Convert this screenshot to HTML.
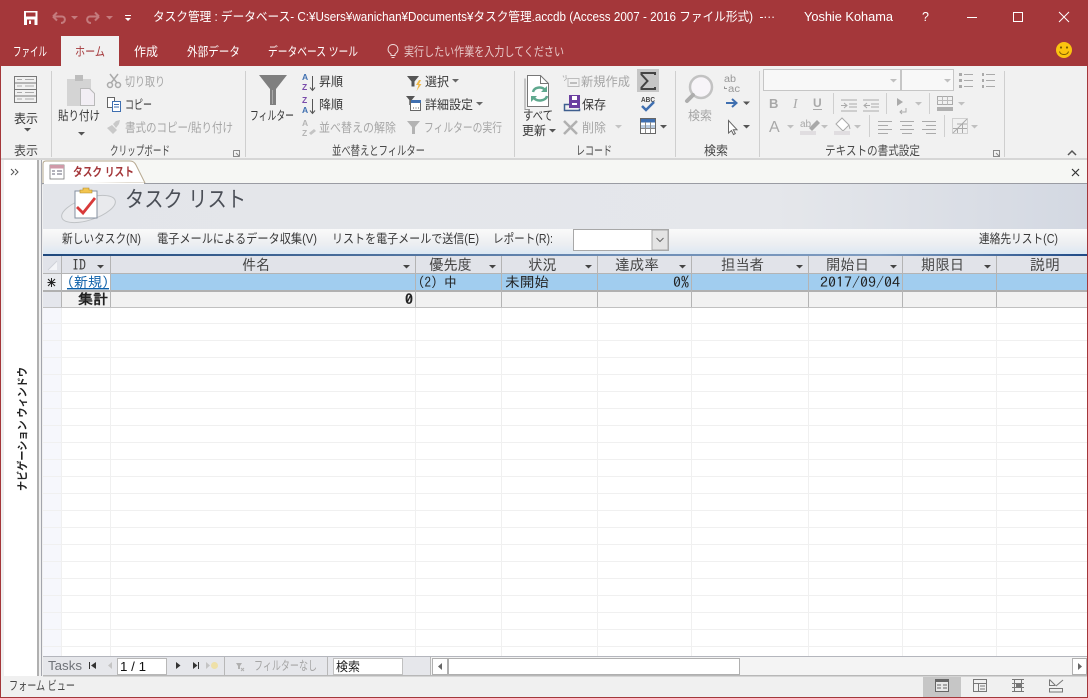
<!DOCTYPE html>
<html lang="ja"><head><meta charset="utf-8"><title>タスク管理</title>
<style>
html,body{margin:0;padding:0;width:1088px;height:698px;overflow:hidden;background:#f0f0f0}
svg{display:block}
text{font-family:"Liberation Sans","Noto Sans CJK JP",sans-serif;font-size:12.5px;fill:#484848;white-space:pre}
.w{fill:#fff}.g{fill:#a6a6a6}.d{fill:#383838}.l{fill:#555}
.m{font-family:"IPAGothic","Noto Sans CJK JP",monospace;font-size:14px;fill:#222}
.h{font-family:"IPAGothic","Noto Sans CJK JP",sans-serif;font-size:15px;fill:#444}
</style></head><body>
<svg width="1088" height="698" viewBox="0 0 1088 698" xmlns="http://www.w3.org/2000/svg">
<defs>
<linearGradient id="fh" x1="0" x2="1" y1="0" y2="0"><stop offset="0" stop-color="#e3e5ea"/><stop offset=".7" stop-color="#e5e7eb"/><stop offset="1" stop-color="#d3d8e2"/></linearGradient>
<linearGradient id="tb" x1="0" x2="0" y1="0" y2="1"><stop offset="0" stop-color="#fafafa"/><stop offset=".6" stop-color="#eceef1"/><stop offset="1" stop-color="#dce8f3"/></linearGradient>
<linearGradient id="bl" x1="0" x2="1" y1="0" y2="0"><stop offset="0" stop-color="#1f497d"/><stop offset=".55" stop-color="#6d8db5"/><stop offset=".8" stop-color="#7f9cc0"/><stop offset="1" stop-color="#1f4a86"/></linearGradient>
<pattern id="rows" width="10" height="17" patternUnits="userSpaceOnUse" y="307"><rect y="16" width="10" height="1" fill="#f0f0f0"/></pattern>
<path id="dn" d="M0 0h7l-3.500 3.500z"/>
</defs>

<!-- Title bar -->
<rect width="1088" height="66" fill="#a4373a"/>
<rect x="24" y="11" width="13.500" height="14" fill="#fff"/><rect x="26" y="12.500" width="9.500" height="4" fill="#a4373a"/><rect x="27" y="19.500" width="7.500" height="5.500" fill="#a4373a"/><rect x="29" y="20.500" width="2" height="3.500" fill="#fff"/>
<path d="M53 16.500h9c4 0 4 6.500-1 6.500M53 16.500l4-4M53 16.500l4 4" fill="none" stroke="#c47b7d" stroke-width="2"/>
<path d="M99 16.500h-9c-4 0-4 6.500 1 6.500M99 16.500l-4-4M99 16.500l-4 4" fill="none" stroke="#c47b7d" stroke-width="2"/>
<use href="#dn" x="71" y="16" fill="#c47b7d"/><use href="#dn" x="106" y="16" fill="#c47b7d"/>
<path d="M125 15h6v1h-6zM125 18h6l-3 3z" fill="#fff"/>
<text class="w" x="153" y="21" textLength="622" lengthAdjust="spacingAndGlyphs">タスク管理 : データベース- C:¥Users¥wanichan¥Documents¥タスク管理.accdb (Access 2007 - 2016 ファイル形式)  -···</text>
<text class="w" x="804" y="21" textLength="89" lengthAdjust="spacingAndGlyphs">Yoshie Kohama</text>
<text class="w" x="922" y="21">?</text>
<rect x="967" y="17" width="10" height="1" fill="#fff"/>
<rect x="1013.500" y="12.500" width="9" height="9" fill="none" stroke="#fff"/>
<path d="M1059 12l10 10M1069 12l-10 10" stroke="#fff" fill="none"/>

<!-- Tabs -->
<rect x="61" y="36" width="58" height="31" fill="#f1f1f1"/>
<text class="w" x="13" y="56" textLength="34" lengthAdjust="spacingAndGlyphs">ファイル</text>
<text x="75" y="56" style="fill:#a4373a" textLength="30" lengthAdjust="spacingAndGlyphs">ホーム</text>
<text class="w" x="134" y="56" textLength="24" lengthAdjust="spacingAndGlyphs">作成</text>
<text class="w" x="187" y="56" textLength="53" lengthAdjust="spacingAndGlyphs">外部データ</text>
<text class="w" x="268" y="56" textLength="90" lengthAdjust="spacingAndGlyphs">データベース ツール</text>
<path d="M391 55.500v-1.500c-5-3-3-9.500 2-9.500s7 6.500 2 9.500v1.500zM391.500 57.500h3" fill="none" stroke="#f0dcdc"/>
<text x="404" y="56" style="fill:#e6c8c8" textLength="160" lengthAdjust="spacingAndGlyphs">実行したい作業を入力してください</text>
<circle cx="1064" cy="50" r="8" fill="#fbc40f"/><circle cx="1061" cy="47.500" r="1.100" fill="#7a5a00"/><circle cx="1067" cy="47.500" r="1.100" fill="#7a5a00"/><path d="M1059.500 51.500c1 4 8 4 9 0" fill="none" stroke="#7a5a00"/>

<!-- Ribbon -->
<rect y="66" width="1088" height="92" fill="#f1f1f1"/>
<rect y="158" width="1088" height="2" fill="#d6d6d6"/>
<rect y="160" width="1088" height="518" fill="#f0f0f0"/>
<g fill="#cfcfcf"><rect x="51" y="71" width="1" height="86"/><rect x="245" y="71" width="1" height="86"/><rect x="514" y="71" width="1" height="86"/><rect x="675" y="71" width="1" height="86"/><rect x="759" y="71" width="1" height="86"/><rect x="1004" y="71" width="1" height="86"/></g>

<!-- View icon -->
<g fill="none" stroke="#777"><rect x="14.500" y="76.500" width="22" height="26"/><path d="M14 83h23M14 89.500h23M14 96h23"/><path d="M25 79.500h9M25 86h9M25 92.500h9M25 99h9M17 79.500h5M17 86h5M17 92.500h5M17 99h5" stroke="#aaa"/></g>
<text x="14" y="123" class="d" textLength="24" lengthAdjust="spacingAndGlyphs">表示</text><use href="#dn" x="24" y="128" fill="#555"/>
<text x="14" y="155" textLength="24" lengthAdjust="spacingAndGlyphs">表示</text>

<!-- Clipboard -->
<rect x="67" y="79" width="24" height="27" fill="#d4d4d4"/><rect x="75" y="75" width="8" height="6" fill="#bdbdbd"/>
<path d="M80.500 88.500h9l5 5v12h-14z" fill="#f2eef4" stroke="#b9b9b9"/>
<text x="58" y="120" class="d" textLength="42" lengthAdjust="spacingAndGlyphs">貼り付け</text><use href="#dn" x="78" y="132" fill="#555"/>
<path d="M110 74l7 9M118 74l-7 9" stroke="#aaa" stroke-width="1.500" fill="none"/><circle cx="110" cy="85" r="2.500" fill="none" stroke="#aaa" stroke-width="1.500"/><circle cx="118" cy="85" r="2.500" fill="none" stroke="#aaa" stroke-width="1.500"/>
<text x="125" y="86" class="g" textLength="40" lengthAdjust="spacingAndGlyphs">切り取り</text>
<rect x="107.500" y="97.500" width="7" height="10" fill="#fff" stroke="#666"/><rect x="112.500" y="101.500" width="8" height="10" fill="#fff" stroke="#3f6fb0"/><path d="M114 104.500h5M114 107h5" stroke="#3f6fb0"/>
<text x="125" y="109" class="d" textLength="27" lengthAdjust="spacingAndGlyphs">コピー</text>
<path d="M107 128l6 6 4-4-5-5zM113 124l3-3 4-1-1 4-3 4z" fill="#c9c9c9"/>
<text x="125" y="132" class="g" textLength="108" lengthAdjust="spacingAndGlyphs">書式のコピー/貼り付け</text>
<text x="110" y="155" textLength="60" lengthAdjust="spacingAndGlyphs">クリップボード</text>
<path d="M233.500 150.500h6v6M233.500 150.500v6h6M236 153l3 3" fill="none" stroke="#888"/>

<!-- Sort & filter -->
<path d="M259 75h28l-11 14v16h-6v-16z" fill="#7f7f7f"/><path d="M272 90h1v14h-1z" fill="#aaa"/>
<text x="250" y="120" class="d" textLength="44" lengthAdjust="spacingAndGlyphs">フィルター</text>
<text x="302" y="80" style="font-size:8.500px;font-weight:700;fill:#3f6fb0">A</text><text x="302" y="90" style="font-size:8.500px;font-weight:700;fill:#7a4bab">Z</text>
<path d="M312.500 76v14M310 87.500l2.500 3 2.500-3" fill="none" stroke="#555"/>
<text x="319" y="86" class="d" textLength="24" lengthAdjust="spacingAndGlyphs">昇順</text>
<text x="302" y="103" style="font-size:8.500px;font-weight:700;fill:#7a4bab">Z</text><text x="302" y="113" style="font-size:8.500px;font-weight:700;fill:#3f6fb0">A</text>
<path d="M312.500 99v14M310 110.500l2.500 3 2.500-3" fill="none" stroke="#555"/>
<text x="319" y="109" class="d" textLength="24" lengthAdjust="spacingAndGlyphs">降順</text>
<text x="302" y="126" style="font-size:8.500px;font-weight:700;fill:#b5b5b5">A</text><text x="302" y="136" style="font-size:8.500px;font-weight:700;fill:#b5b5b5">Z</text>
<path d="M309 133l5-4 2 2-5 4z" fill="#c4c4c4"/>
<text x="319" y="132" class="g" textLength="77" lengthAdjust="spacingAndGlyphs">並べ替えの解除</text>
<path d="M407 76h12l-4.500 5.500v5h-3v-5z" fill="#555"/><path d="M419 80l-3 5h2.500l-2 6 5-7h-2.500l2-4z" fill="#f0b94a"/>
<text x="425" y="86" class="d" textLength="24" lengthAdjust="spacingAndGlyphs">選択</text><use href="#dn" x="452" y="79" fill="#666"/>
<path d="M406 96h9l-3.200 4v5h-2.500v-5z" fill="#555"/><rect x="410.500" y="100.500" width="10" height="10" fill="#fff" stroke="#666"/><rect x="411" y="100" width="10" height="3" fill="#3f6fb0"/><path d="M413 108h1M415.500 108h1M418 108h1" stroke="#555"/>
<text x="425" y="109" class="d" textLength="48" lengthAdjust="spacingAndGlyphs">詳細設定</text><use href="#dn" x="476" y="102" fill="#666"/>
<path d="M407 121h13l-5 6v7h-3v-7z" fill="#b3b3b3"/>
<text x="424" y="132" class="g" textLength="78" lengthAdjust="spacingAndGlyphs">フィルターの実行</text>
<text x="332" y="155" textLength="93" lengthAdjust="spacingAndGlyphs">並べ替えとフィルター</text>
<!-- Records -->
<path d="M527.500 75.500h13l8 8v23h-21z" fill="#fff" stroke="#777"/><path d="M530 109.500h-5v-31" fill="none" stroke="#999"/><path d="M540.500 75.500v8h8" fill="none" stroke="#777"/>
<path d="M533 92c1-5 9-6 12-2M547 96c-1 5-10 6-13 2" fill="none" stroke="#5fa88e" stroke-width="2.500"/><path d="M547 86v6h-6zM531 102v-6h6z" fill="#5fa88e"/>
<text x="523" y="120" class="d" textLength="30" lengthAdjust="spacingAndGlyphs">すべて</text>
<text x="522" y="135" class="d" textLength="24" lengthAdjust="spacingAndGlyphs">更新</text><use href="#dn" x="549" y="129" fill="#555"/>
<path d="M564 80.500h1M567 78l-2 2M566 75v3M563 75.500l1 2" stroke="#bbb"/><rect x="568" y="78.500" width="11" height="8" fill="none" stroke="#bdbdbd"/><rect x="570" y="82" width="7" height="2" fill="#bdbdbd"/>
<text x="581" y="86" class="g" textLength="49" lengthAdjust="spacingAndGlyphs">新規作成</text>
<rect x="569" y="95" width="11" height="13" fill="#6b3fa0"/><rect x="572" y="96" width="5" height="4" fill="#fff"/><rect x="572" y="103" width="5" height="2" fill="#fff"/><path d="M569 104.500h-4.500v6h15v-2" fill="none" stroke="#3f5f8f" stroke-width="1.500"/>
<text x="582" y="109" class="d" textLength="24" lengthAdjust="spacingAndGlyphs">保存</text>
<path d="M564 121l13 13M577 121l-13 13" stroke="#b0b0b0" stroke-width="2.500" fill="none"/>
<text x="582" y="132" class="g" textLength="24" lengthAdjust="spacingAndGlyphs">削除</text><use href="#dn" x="615" y="125" fill="#c4c4c4"/>
<rect x="637" y="69" width="22" height="23" fill="#c6c6c6"/>
<path d="M655 75v-2h-13.500v1.500l6 6.500-6 6.500v1.500h13.500v-2" fill="none" stroke="#444" stroke-width="2"/>
<text x="641" y="102" style="font-size:7.500px;font-weight:700;fill:#444" textLength="14" lengthAdjust="spacingAndGlyphs">ABC</text>
<path d="M642 106l4 4 8-8" fill="none" stroke="#3f6fb0" stroke-width="2.500"/>
<rect x="640.500" y="118.500" width="15" height="15" fill="#fff" stroke="#666"/><rect x="641" y="119" width="14" height="3.500" fill="#3f6fb0"/><rect x="641" y="125" width="14" height="3.500" fill="#b9cbe0"/><path d="M645.500 122v11M650.500 122v11M641 128.500h14" stroke="#888" fill="none"/>
<use href="#dn" x="660" y="125" fill="#555"/>
<text x="576" y="155" textLength="36" lengthAdjust="spacingAndGlyphs">レコード</text>
<!-- Find -->
<circle cx="701" cy="87" r="11" fill="#f7f4f8" stroke="#c2c2c2" stroke-width="2.500"/><path d="M693 95l-6 6" stroke="#adadad" stroke-width="4" stroke-linecap="round"/>
<text x="688" y="120" class="g" textLength="24" lengthAdjust="spacingAndGlyphs">検索</text>
<text x="724" y="82" style="font-size:10px;fill:#999" textLength="12" lengthAdjust="spacingAndGlyphs">ab</text><text x="728" y="92" style="font-size:10px;fill:#999" textLength="12" lengthAdjust="spacingAndGlyphs">ac</text><path d="M727 88.500h-2.500v-2" fill="none" stroke="#999"/>
<path d="M726 103h10M732 99l4.500 4-4.500 4" fill="none" stroke="#3f6fb0" stroke-width="2"/><use href="#dn" x="743" y="101.500" fill="#555"/>
<path d="M728.500 120.500v12.500l3-2.500 2 4 1.800-1-2-3.800h3.700z" fill="#fff" stroke="#666"/><use href="#dn" x="743" y="125" fill="#555"/>
<text x="704" y="155" textLength="24" lengthAdjust="spacingAndGlyphs">検索</text>
<!-- Text formatting -->
<rect x="763.500" y="69.500" width="137" height="21" fill="#f8f8f8" stroke="#c6c6c6"/><rect x="901.500" y="69.500" width="52" height="21" fill="#f8f8f8" stroke="#c6c6c6"/>
<use href="#dn" x="890" y="79" fill="#c0c0c0"/><use href="#dn" x="944" y="79" fill="#c0c0c0"/>
<g fill="#aaa"><rect x="959" y="73" width="3" height="3"/><rect x="959" y="79" width="3" height="3"/><rect x="959" y="85" width="3" height="3"/><rect x="964" y="74" width="9" height="1"/><rect x="964" y="80" width="9" height="1"/><rect x="964" y="86" width="9" height="1"/><rect x="982" y="73" width="2" height="3"/><rect x="982" y="79" width="2" height="3"/><rect x="982" y="85" width="2" height="3"/><rect x="986" y="74" width="9" height="1"/><rect x="986" y="80" width="9" height="1"/><rect x="986" y="86" width="9" height="1"/></g>
<text x="769" y="108" style="font-size:13px;font-weight:700;fill:#a8a8a8">B</text>
<text x="793" y="108" style="font-size:13.500px;font-style:italic;font-family:'Liberation Serif',serif;fill:#a8a8a8">I</text>
<text x="813" y="107" style="font-size:12px;font-weight:700;fill:#a8a8a8">U</text><rect x="813" y="109" width="9" height="1" fill="#a8a8a8"/>
<g fill="#cfcfcf"><rect x="833" y="93" width="1" height="21"/><rect x="886" y="93" width="1" height="21"/><rect x="929" y="93" width="1" height="21"/><rect x="869" y="115" width="1" height="22"/><rect x="944" y="115" width="1" height="22"/></g>
<path d="M841 100h16M849 104h8M849 107h8M841 111h16M841 105.500h6M844 103l3 2.500-3 2.500" stroke="#aaa" fill="none"/>
<path d="M863 100h16M871 104h8M871 107h8M863 111h16M864 105.500h6M867 103l-3 2.500 3 2.500" stroke="#aaa" fill="none"/>
<path d="M897 98l6 4-6 4z" fill="#aaa"/><path d="M906 108v4h-6M902 110l-2 2 2 2" fill="none" stroke="#aaa"/><use href="#dn" x="915" y="102" fill="#c0c0c0"/>
<rect x="937.500" y="96.500" width="15" height="8" fill="none" stroke="#aaa"/><path d="M942.500 96.500v8M947.500 96.500v8M937 100.500h15" stroke="#bbb"/><rect x="937" y="107" width="16" height="4" fill="#b0b0b0"/><use href="#dn" x="958" y="102" fill="#c0c0c0"/>
<text x="769" y="132" style="font-size:16px;fill:#a8a8a8">A</text><use href="#dn" x="787" y="125" fill="#c0c0c0"/>
<text x="800" y="127" style="font-size:10px;fill:#a8a8a8">ab</text><path d="M812 131l-3-3 8-8 3 3z" fill="#a8a8a8"/><rect x="800" y="131" width="16" height="4" fill="#e0dde0"/><use href="#dn" x="821" y="125" fill="#c0c0c0"/>
<path d="M836 124l6-6 7 7-6 6z" fill="#fff" stroke="#aaa"/><path d="M849 125l1 4" stroke="#aaa"/><rect x="834" y="131" width="16" height="4" fill="#e0dde0"/><use href="#dn" x="854" y="125" fill="#c0c0c0"/>
<g stroke="#aaa" fill="none"><path d="M878 121.500h14M878 125.500h10M878 129.500h14M878 133.500h10M900 121.500h14M902 125.500h10M900 129.500h14M902 133.500h10M922 121.500h14M926 125.500h10M922 129.500h14M926 133.500h10"/></g>
<path d="M952.500 118.500h15v15h-15z" fill="none" stroke="#b0b0b0" stroke-dasharray="1 1"/><path d="M953 133l14-14M957.500 133v-5M962.500 133v-10M953 128.500h14M957 124h10" stroke="#aaa" fill="none"/><use href="#dn" x="971" y="125" fill="#c0c0c0"/>
<text x="825" y="155" textLength="95" lengthAdjust="spacingAndGlyphs">テキストの書式設定</text>
<path d="M993.500 150.500h6v6h-6zM996 153l3 3" fill="none" stroke="#888"/>
<path d="M1068 155l4-4 4 4" fill="none" stroke="#555" stroke-width="1.500"/>

<!-- Nav pane -->
<rect x="4" y="160" width="33" height="516" fill="#fff"/>
<rect x="37" y="160" width="2" height="516" fill="#b0b0b0"/>
<rect x="39" y="160" width="3" height="516" fill="#f0f0f0"/>
<rect x="41" y="160" width="1" height="516" fill="#a4a6ad"/>
<path d="M11 169l3 3-3 3M15 169l3 3-3 3" fill="none" stroke="#555"/>
<text transform="translate(26 491) rotate(-90)" style="font-size:11px;font-weight:700;fill:#222" textLength="124" lengthAdjust="spacingAndGlyphs">ナビゲーション ウィンドウ</text>

<!-- Document tab strip -->
<rect x="42" y="160" width="1046" height="24" fill="#f6f7f4"/>
<path d="M43 184v-20q0-3 3-3h84q4 0 6 4l9 18z" fill="#fff" stroke="#b6a88f"/>
<rect x="50" y="165" width="14" height="14" fill="#fff" stroke="#777" stroke-width=".8"/><rect x="50" y="165" width="14" height="3.500" fill="#d09aa8"/><path d="M52 171h3M52 174h3M57 171h5M57 174h5" stroke="#667"/>
<text x="73" y="176" style="font-weight:700;fill:#a4373a;font-size:12px" textLength="61" lengthAdjust="spacingAndGlyphs">タスク リスト</text>
<path d="M1072 169l7 7M1079 169l-7 7" stroke="#333" stroke-width="1.200" fill="none"/>
<rect x="42" y="183" width="1046" height="1" fill="#9a9ca3"/><rect x="44" y="183" width="100" height="1" fill="#fff"/>

<!-- Form header -->
<rect x="43" y="184" width="1045" height="45" fill="url(#fh)"/>
<ellipse cx="88.500" cy="209" rx="28" ry="11" transform="rotate(-18 88.500 209)" fill="#e9eaed" stroke="#bfc2c5"/>
<rect x="75" y="191" width="22" height="27" fill="#fff" stroke="#8590a0"/>
<path d="M80 193v-3h3v-2h6v2h3v3z" fill="#f3c54f" stroke="#b08a2a" stroke-width=".6"/>
<path d="M77 207l6 6 12-15" fill="none" stroke="#d83a3a" stroke-width="2.800"/>
<text x="125" y="207" style="font-size:22px;fill:#4b4f57" textLength="121" lengthAdjust="spacingAndGlyphs">タスク リスト</text>

<!-- Form toolbar -->
<rect x="43" y="229" width="1045" height="25" fill="url(#tb)"/>
<text x="62" y="243" class="d" textLength="79" lengthAdjust="spacingAndGlyphs">新しいタスク(N)</text>
<text x="157" y="243" class="d" textLength="160" lengthAdjust="spacingAndGlyphs">電子メールによるデータ収集(V)</text>
<text x="332" y="243" class="d" textLength="147" lengthAdjust="spacingAndGlyphs">リストを電子メールで送信(E)</text>
<text x="493" y="243" class="d" textLength="60" lengthAdjust="spacingAndGlyphs">レポート(R):</text>
<rect x="573.500" y="229.500" width="95" height="21" fill="#fff" stroke="#a8a8a8"/><rect x="652" y="230" width="16" height="20" fill="#e4e4e4" stroke="#a8a8a8"/><path d="M656.500 238l3.500 3.500 3.500-3.500" fill="none" stroke="#666"/>
<text x="979" y="243" class="d" textLength="79" lengthAdjust="spacingAndGlyphs">連絡先リスト(C)</text>
<rect x="43" y="254" width="1045" height="2" fill="url(#bl)"/>

<!-- Datasheet -->
<rect x="43" y="256" width="1044" height="400" fill="#fff"/>
<rect x="43" y="307" width="1044" height="349" fill="url(#rows)"/>
<rect x="43" y="307" width="18" height="349" fill="#f6f7fc"/>
<rect x="43" y="307" width="18" height="349" fill="url(#rows)"/>
<g fill="#f0f0f0"><rect x="61" y="307" width="1" height="349"/><rect x="110" y="307" width="1" height="349"/><rect x="415" y="307" width="1" height="349"/><rect x="501" y="307" width="1" height="349"/><rect x="597" y="307" width="1" height="349"/><rect x="691" y="307" width="1" height="349"/><rect x="808" y="307" width="1" height="349"/><rect x="902" y="307" width="1" height="349"/><rect x="996" y="307" width="1" height="349"/></g>
<rect x="43" y="256" width="1044" height="17" fill="#e1e3e9"/>
<rect x="43" y="273" width="1044" height="1" fill="#b4b4b4"/>
<rect x="43" y="274" width="18" height="16" fill="#e9ebef"/><rect x="61" y="274" width="49" height="16" fill="#fff"/>
<rect x="110" y="274" width="977" height="16" fill="#a1cdef"/>
<rect x="43" y="290" width="1044" height="2" fill="#b0b0b0"/>
<rect x="43" y="292" width="18" height="15" fill="#e4e6ec"/>
<rect x="61" y="292" width="1026" height="15" fill="#f1f1f1"/>
<rect x="43" y="307" width="1044" height="1" fill="#c0c0c0"/>
<g fill="#b4b4b4"><rect x="61" y="256" width="1" height="51"/><rect x="110" y="256" width="1" height="51"/><rect x="415" y="256" width="1" height="51"/><rect x="501" y="256" width="1" height="51"/><rect x="597" y="256" width="1" height="51"/><rect x="691" y="256" width="1" height="51"/><rect x="808" y="256" width="1" height="51"/><rect x="902" y="256" width="1" height="51"/><rect x="996" y="256" width="1" height="51"/></g>
<path d="M48 270l9-9v9z" fill="#f4f5f8"/><path d="M48 270l9-9" stroke="#cfd2d8"/>
<text class="h" x="72" y="270" textLength="14" lengthAdjust="spacingAndGlyphs">ID</text>
<text class="h" x="242" y="270" textLength="28" lengthAdjust="spacingAndGlyphs">件名</text>
<text class="h" x="429" y="270" textLength="43" lengthAdjust="spacingAndGlyphs">優先度</text>
<text class="h" x="528" y="270" textLength="29" lengthAdjust="spacingAndGlyphs">状況</text>
<text class="h" x="615" y="270" textLength="44" lengthAdjust="spacingAndGlyphs">達成率</text>
<text class="h" x="721" y="270" textLength="43" lengthAdjust="spacingAndGlyphs">担当者</text>
<text class="h" x="826" y="270" textLength="43" lengthAdjust="spacingAndGlyphs">開始日</text>
<text class="h" x="921" y="270" textLength="43" lengthAdjust="spacingAndGlyphs">期限日</text>
<text class="h" x="1030" y="270" textLength="30" lengthAdjust="spacingAndGlyphs">説明</text>
<g fill="#444"><use href="#dn" x="97" y="265"/><use href="#dn" x="403" y="265"/><use href="#dn" x="489" y="265"/><use href="#dn" x="585" y="265"/><use href="#dn" x="679" y="265"/><use href="#dn" x="796" y="265"/><use href="#dn" x="890" y="265"/><use href="#dn" x="984" y="265"/></g>
<path d="M48 279l7 7M55 279l-7 7M51.500 278v9M47.500 282.500h8" stroke="#222" fill="none"/>
<text class="m" x="67" y="287" style="fill:#0a5ea8;text-decoration:underline" textLength="42" lengthAdjust="spacingAndGlyphs">(新規)</text>
<text class="m" x="418" y="287" textLength="39" lengthAdjust="spacingAndGlyphs">(2) 中</text>
<text class="m" x="505" y="287" textLength="44" lengthAdjust="spacingAndGlyphs">未開始</text>
<text class="m" x="673" y="287" textLength="16" lengthAdjust="spacingAndGlyphs">0%</text>
<text class="m" x="820" y="287" textLength="80" lengthAdjust="spacingAndGlyphs">2017/09/04</text>
<text class="m" x="78" y="304" style="font-weight:700" textLength="30" lengthAdjust="spacingAndGlyphs">集計</text>
<text class="m" x="405" y="304" style="font-weight:700" textLength="8" lengthAdjust="spacingAndGlyphs">0</text>

<!-- Nav bar -->
<rect x="43" y="656" width="1044" height="1" fill="#b4b6bd"/>
<rect x="43" y="657" width="387" height="19" fill="#e6e7eb"/>
<rect x="430" y="657" width="657" height="19" fill="#f4f4f4"/>
<rect x="43" y="675" width="1044" height="1.500" fill="#b8b8b8"/>
<text x="48" y="670" style="font-size:13px;fill:#6f7278" textLength="34" lengthAdjust="spacingAndGlyphs">Tasks</text>
<path d="M89.500 662v7" stroke="#333"/><path d="M96 662v7l-5-3.500z" fill="#333"/>
<path d="M112 662v7l-4-3.500z" fill="#c4c4c4"/>
<rect x="117.500" y="658.500" width="49" height="16" fill="#fff" stroke="#b8b8b8"/>
<text x="120" y="671" style="font-size:12.500px;fill:#111" textLength="26" lengthAdjust="spacingAndGlyphs">1 / 1</text>
<path d="M176 662v7l4.500-3.500z" fill="#333"/>
<path d="M193 662v7l4.500-3.500z" fill="#333"/><path d="M198.500 662v7" stroke="#333"/>
<path d="M206 662v7l4-3.500z" fill="#c4c4c4"/><circle cx="214.500" cy="665.500" r="3.500" fill="#eee0a8"/>
<rect x="224" y="657" width="1" height="19" fill="#b8b8b8"/>
<path d="M236 663h6l-2 3v3h-2v-3z" fill="#b0b0b0"/><path d="M241 668l3 3M244 668l-3 3" stroke="#b0b0b0"/>
<text x="254" y="670" class="g" textLength="63" lengthAdjust="spacingAndGlyphs">フィルターなし</text>
<rect x="327" y="657" width="1" height="19" fill="#b8b8b8"/>
<rect x="333.500" y="658.500" width="69" height="16" fill="#fff" stroke="#c0c0c0"/>
<text x="336" y="671" style="fill:#222" textLength="24" lengthAdjust="spacingAndGlyphs">検索</text>
<rect x="430" y="657" width="1" height="19" fill="#b8b8b8"/>
<rect x="432.500" y="658.500" width="15" height="16" fill="#fff" stroke="#b0b0b0"/><path d="M442 663v7l-4-3.500z" fill="#666"/>
<rect x="448.500" y="658.500" width="291" height="16" fill="#fff" stroke="#b0b0b0"/>
<rect x="1072.500" y="658.500" width="14" height="16" fill="#fff" stroke="#b0b0b0"/><path d="M1078 663v7l4-3.500z" fill="#666"/>

<!-- Status bar -->
<rect y="677" width="1088" height="21" fill="#f0f0f0"/>
<text x="9" y="690" textLength="66" lengthAdjust="spacingAndGlyphs">フォーム ビュー</text>
<rect x="923" y="677" width="38" height="20" fill="#c6c6c6"/>
<rect x="935.500" y="679.500" width="13" height="12" fill="#e8e8e8" stroke="#666"/><rect x="935" y="679" width="14" height="3" fill="#666"/><path d="M937 685h4M943 685h4M937 688h4M943 688h4" stroke="#666"/>
<rect x="973.500" y="679.500" width="13" height="12" fill="none" stroke="#777"/><path d="M973 683.500h14M978.500 683.500v8M980 686h5M980 689h5" stroke="#777" fill="none"/>
<path d="M1012 679.500h12M1012 691.500h12M1014.500 679.500v12M1021.500 679.500v12M1012 683.500h12M1012 687.500h12" fill="none" stroke="#777"/><rect x="1016" y="684" width="5" height="3" fill="#777"/>
<path d="M1049.500 679.500v6h6M1049.500 679.500l6 6M1056 686l7-6" fill="none" stroke="#777"/><rect x="1049.500" y="688.500" width="13" height="3.500" fill="none" stroke="#777"/>

<!-- Window frame -->
<rect x="0" y="66" width="1" height="632" fill="#a4373a"/>
<rect x="1087" y="66" width="1" height="632" fill="#a4373a"/>
<rect x="0" y="697" width="1088" height="1" fill="#a4373a"/>
</svg>
</body></html>
